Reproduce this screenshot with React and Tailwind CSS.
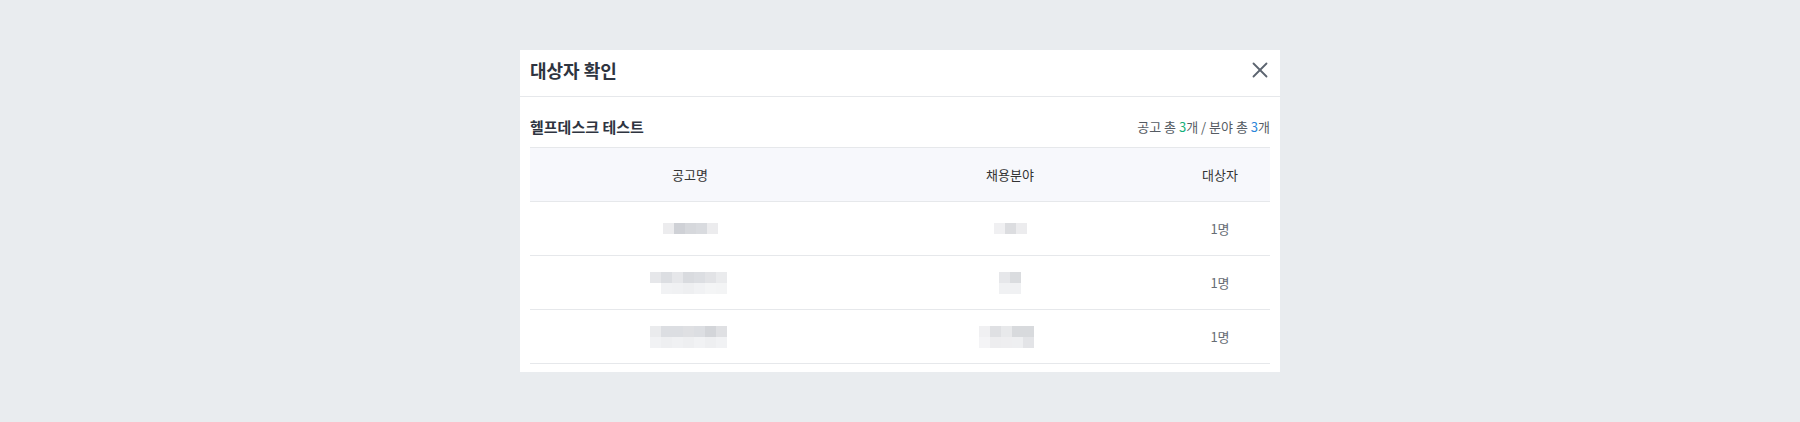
import { X } from 'lucide-react';

const FONT = { fontFamily: '"Noto Sans CJK KR", "Noto Sans", sans-serif' };

// blurred (pixelated) cell contents, 11px blocks
const ROWS = [
  {
    title: [['#ececee', '#cfd1d6', '#d6d8dc', '#d9dbdf', '#ececee']],
    field: [['#f0f0f2', '#dcdde0', '#ececee']],
  },
  {
    title: [
      ['#e6e7ea', '#dcdee2', '#e6e7ea', '#d9dbdf', '#dcdee2', '#e2e3e6', '#eaebed'],
      ['#ffffff', '#f1f2f4', '#f0f1f3', '#eeeff1', '#f1f2f4', '#f4f5f6', '#f3f4f5'],
    ],
    field: [
      ['#e6e7ea', '#dadcdf'],
      ['#f0f1f3', '#f0f1f3'],
    ],
  },
  {
    title: [
      ['#eaebed', '#dcdee2', '#dcdee2', '#dfe0e3', '#dcdee2', '#d3d5d9', '#dfe0e3'],
      ['#f1f2f4', '#eeeff1', '#f0f1f3', '#eeeff1', '#f1f2f4', '#eeeff1', '#f1f2f4'],
    ],
    field: [
      ['#f0f0f2', '#dfe0e3', '#e8e9eb', '#d8dadd', '#d8dadd'],
      ['#f4f4f6', '#ededef', '#eeeef0', '#eeeff1', '#e3e4e7'],
    ],
  },
];

function Mosaic({ grid, shift = '' }) {
  return (
    <div className={`flex flex-col ${shift}`}>
      {grid.map((line, i) => (
        <div key={i} className="flex">
          {line.map((c, j) => (
            <div key={j} className="w-[11px] h-[11px]" style={{ backgroundColor: c }} />
          ))}
        </div>
      ))}
    </div>
  );
}

export default function App() {
  return (
    <div className="w-full h-[422px] bg-[#e9ecef] flex items-center justify-center" style={FONT}>
      <div className="w-[760px] h-[322px] bg-white flex flex-col">
        {/* Header */}
        <div className="h-[47px] shrink-0 pl-[10px] pr-[7px] pb-[7px] flex items-center justify-between border-b border-[#e6e8eb]">
          <h2 className="text-[18px] font-bold text-[#2e3440] leading-none">대상자 확인</h2>
          <button className="text-[#5c6470]">
            <X size={26} strokeWidth={1.7} />
          </button>
        </div>

        <div className="px-[10px] pb-[8px] flex flex-col">
          {/* Sub header */}
          <div className="h-[50px] pt-[8px] flex items-center justify-between">
            <h3 className="text-[15px] font-bold text-[#2e3440] leading-none">헬프데스크 테스트</h3>
            <p className="text-[13px] text-[#555b63] leading-none">
              공고 총 <span className="text-[#13b07a]">3</span>개 / 분야 총{' '}
              <span className="text-[#2b86d9]">3</span>개
            </p>
          </div>

          {/* Table */}
          <div className="flex flex-col">
            <div className="h-[55px] grid grid-cols-[320px_320px_100px] items-center bg-[#f7f8fc] border-y border-[#e6e8eb] text-[13px] text-[#333]">
              <div className="text-center">공고명</div>
              <div className="text-center">채용분야</div>
              <div className="text-center">대상자</div>
            </div>
            {ROWS.map((row, i) => (
              <div
                key={i}
                className="h-[54px] grid grid-cols-[320px_320px_100px] items-center border-b border-[#e6e8eb] text-[13px] text-[#666c74]"
              >
                <div className="flex justify-center">
                  <Mosaic grid={row.title} shift={i > 0 ? '-ml-[3px]' : ''} />
                </div>
                <div className="flex justify-center">
                  <Mosaic grid={row.field} shift={i === 2 ? '-ml-[8px]' : ''} />
                </div>
                <div className="text-center">1명</div>
              </div>
            ))}
          </div>
        </div>
      </div>
    </div>
  );
}
